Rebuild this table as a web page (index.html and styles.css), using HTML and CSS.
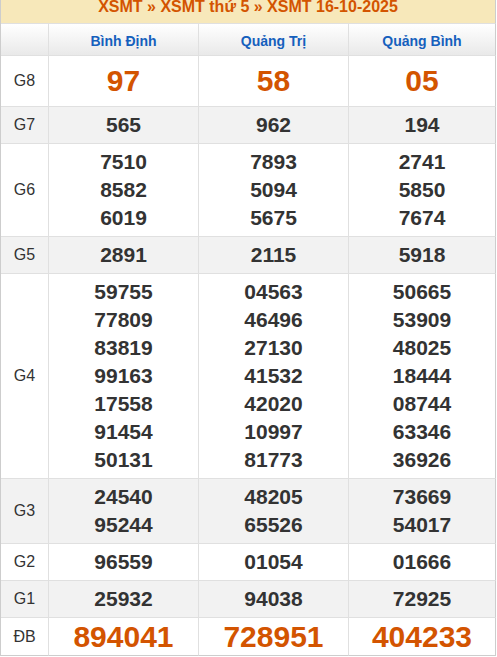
FILE: index.html
```html
<!DOCTYPE html>
<html lang="vi">
<head>
<meta charset="utf-8">
<title>XSMT 16-10-2025</title>
<link rel="stylesheet" href="styles.css">
</head>
<body>
<div class="board">
  <div class="title">XSMT » XSMT thứ 5 » XSMT 16-10-2025</div>

  <div class="row head">
    <div class="cell label"></div>
    <div class="cell city">Bình Định</div>
    <div class="cell city">Quảng Trị</div>
    <div class="cell city last">Quảng Bình</div>
  </div>

  <div class="row g8">
    <div class="cell label">G8</div>
    <div class="cell num">97</div>
    <div class="cell num">58</div>
    <div class="cell num last">05</div>
  </div>

  <div class="row alt">
    <div class="cell label">G7</div>
    <div class="cell num">565</div>
    <div class="cell num">962</div>
    <div class="cell num last">194</div>
  </div>

  <div class="row">
    <div class="cell label">G6</div>
    <div class="cell num">7510<br>8582<br>6019</div>
    <div class="cell num">7893<br>5094<br>5675</div>
    <div class="cell num last">2741<br>5850<br>7674</div>
  </div>

  <div class="row alt">
    <div class="cell label">G5</div>
    <div class="cell num">2891</div>
    <div class="cell num">2115</div>
    <div class="cell num last">5918</div>
  </div>

  <div class="row">
    <div class="cell label">G4</div>
    <div class="cell num">59755<br>77809<br>83819<br>99163<br>17558<br>91454<br>50131</div>
    <div class="cell num">04563<br>46496<br>27130<br>41532<br>42020<br>10997<br>81773</div>
    <div class="cell num last">50665<br>53909<br>48025<br>18444<br>08744<br>63346<br>36926</div>
  </div>

  <div class="row alt">
    <div class="cell label">G3</div>
    <div class="cell num">24540<br>95244</div>
    <div class="cell num">48205<br>65526</div>
    <div class="cell num last">73669<br>54017</div>
  </div>

  <div class="row">
    <div class="cell label">G2</div>
    <div class="cell num">96559</div>
    <div class="cell num">01054</div>
    <div class="cell num last">01666</div>
  </div>

  <div class="row alt">
    <div class="cell label">G1</div>
    <div class="cell num">25932</div>
    <div class="cell num">94038</div>
    <div class="cell num last">72925</div>
  </div>

  <div class="row db">
    <div class="cell label">ĐB</div>
    <div class="cell num">894041</div>
    <div class="cell num">728951</div>
    <div class="cell num last">404233</div>
  </div>
</div>
</body>
</html>
```

FILE: styles.css
```css
* {
  box-sizing: border-box;
}

body {
  margin: 0;
  background: #fff;
  font-family: "Liberation Sans", Arial, sans-serif;
  color: #333;
}

.board {
  display: grid;
  grid-template-columns: 48px 150px 150px 147px;
  width: 496px;
  border-left: 1px solid #cdcdcd;
}

.title {
  grid-column: 1 / -1;
  height: 24px;
  background: #f7e8ba;
  border-right: 1px solid #cdcdcd;
  border-bottom: 1px solid #e0e0e0;
  color: #d35400;
  font-weight: bold;
  font-size: 16px;
  line-height: 13px;
  text-align: center;
}

.row {
  display: contents;
}

.cell {
  border-right: 1px solid #e0e0e0;
  border-bottom: 1px solid #e0e0e0;
  padding: 4px 0;
  text-align: center;
  background: #fff;
}

.cell.last {
  border-right-color: #cdcdcd;
}

.row.alt .cell {
  background: #f2f2f2;
}

.row.head .cell {
  background: linear-gradient(#ffffff, #e9e9e9);
  line-height: 23px;
  padding: 6px 0 2px;
}

.city {
  color: #1560bd;
  font-weight: bold;
  font-size: 14px;
}

.label {
  display: flex;
  align-items: center;
  justify-content: center;
  font-size: 16px;
  color: #333;
}

.num {
  font-weight: bold;
  font-size: 21px;
  line-height: 28px;
  color: #333;
}

.row.g8 .num {
  font-size: 30px;
  line-height: 42px;
  color: #d35400;
}

.row.db .cell {
  border-bottom-color: #cdcdcd;
}

.row.db .num {
  font-size: 30px;
  line-height: 29px;
  color: #d35400;
}
```
